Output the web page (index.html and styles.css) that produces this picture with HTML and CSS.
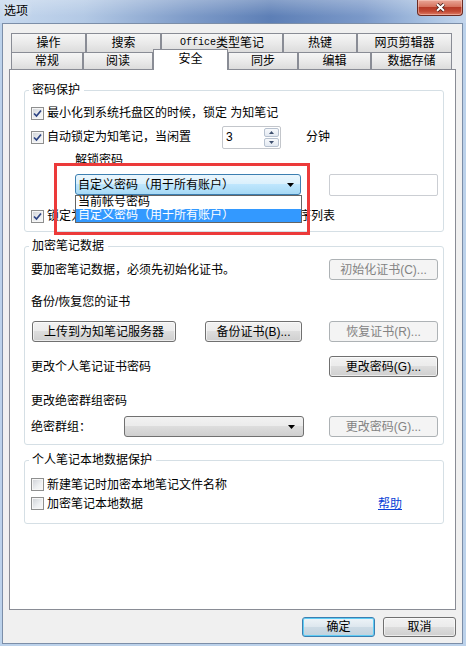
FILE: index.html
```html
<!DOCTYPE html>
<html lang="zh-CN">
<head>
  <meta charset="UTF-8">
  <title>选项</title>
  <link rel="stylesheet" href="styles.css">
</head>
<body>
  <div class="window">
    <div class="titlebar">
      <span class="title">选项</span>
      <div class="close-btn">
        <svg width="11" height="9" viewBox="0 0 11 9">
          <path d="M2 1.2 L9 7.8 M9 1.2 L2 7.8" stroke="#4a1e18" stroke-width="3.6" fill="none"/>
          <path d="M2 1.2 L9 7.8 M9 1.2 L2 7.8" stroke="#fff" stroke-width="2" fill="none"/>
        </svg>
      </div>
    </div>

    <div class="client">
      <div class="tabs">
        <div class="tab-row row-back">
          <div class="tab">操作</div>
          <div class="tab">搜索</div>
          <div class="tab"><span class="mono">Office</span>类型笔记</div>
          <div class="tab">热键</div>
          <div class="tab">网页剪辑器</div>
        </div>
        <div class="tab-row row-front">
          <div class="tab">常规</div>
          <div class="tab">阅读</div>
          <div class="tab selected">安全</div>
          <div class="tab">同步</div>
          <div class="tab">编辑</div>
          <div class="tab">数据存储</div>
        </div>
      </div>

      <div class="panel">
        <fieldset class="group group-lock">
          <legend>密码保护</legend>
          <label class="check-line tall">
            <span class="cb"><svg width="9" height="9" viewBox="0 0 9 9"><path d="M1 4.5 L3.5 7 L8 1.5" stroke="#2c4383" stroke-width="1.7" fill="none"/></svg></span>
            最小化到系统托盘区的时候，锁定 为知笔记
          </label>
          <div class="check-line tall">
            <label class="check-line">
              <span class="cb"><svg width="9" height="9" viewBox="0 0 9 9"><path d="M1 4.5 L3.5 7 L8 1.5" stroke="#2c4383" stroke-width="1.7" fill="none"/></svg></span>
              自动锁定为知笔记，当闲置
            </label>
            <div class="spin">
              <span class="spin-value">3</span>
              <span class="spin-btns">
                <span class="spin-btn"><svg width="5" height="3" viewBox="0 0 5 3"><polygon points="2.5,0 5,3 0,3" fill="#3d4f6e"/></svg></span>
                <span class="spin-btn"><svg width="5" height="3" viewBox="0 0 5 3"><polygon points="0,0 5,0 2.5,3" fill="#3d4f6e"/></svg></span>
              </span>
            </div>
            <span class="unit">分钟</span>
          </div>
          <div class="unlock-label">解锁密码</div>
          <div class="unlock-row">
            <div class="combo-wrap">
              <div class="combo combo-active">
                <span>自定义密码（用于所有账户）</span>
                <svg width="7" height="4" viewBox="0 0 7 4"><polygon points="0,0 7,0 3.5,4" fill="#000"/></svg>
              </div>
              <ul class="dropdown">
                <li>当前帐号密码</li>
                <li class="highlight">自定义密码（用于所有账户）</li>
              </ul>
            </div>
            <div class="textbox"></div>
          </div>
          <label class="check-line lock-line">
            <span class="cb"><svg width="9" height="9" viewBox="0 0 9 9"><path d="M1 4.5 L3.5 7 L8 1.5" stroke="#2c4383" stroke-width="1.7" fill="none"/></svg></span>
            锁定为知笔记时，隐藏笔记本树和标签目录的排序列表
          </label>
        </fieldset>

        <fieldset class="group group-cert">
          <legend>加密笔记数据</legend>
          <div class="btn-row first">
            <span>要加密笔记数据，必须先初始化证书。</span>
            <button class="btn btn-side" disabled>初始化证书(C)...</button>
          </div>
          <div class="text-line backup-title">备份/恢复您的证书</div>
          <div class="btn-row upload-row">
            <button class="btn btn-upload">上传到为知笔记服务器</button>
            <button class="btn btn-backup">备份证书(B)...</button>
            <button class="btn btn-side" disabled>恢复证书(R)...</button>
          </div>
          <div class="btn-row change-row">
            <span>更改个人笔记证书密码</span>
            <button class="btn btn-side">更改密码(G)...</button>
          </div>
          <div class="text-line secret-title">更改绝密群组密码</div>
          <div class="btn-row secret-row">
            <span>绝密群组：</span>
            <div class="combo combo-group">
              <span></span>
              <svg width="7" height="4" viewBox="0 0 7 4"><polygon points="0,0 7,0 3.5,4" fill="#000"/></svg>
            </div>
            <button class="btn btn-side" disabled>更改密码(G)...</button>
          </div>
        </fieldset>

        <fieldset class="group group-local">
          <legend>个人笔记本地数据保护</legend>
          <label class="check-line short">
            <span class="cb"></span>
            新建笔记时加密本地笔记文件名称
          </label>
          <div class="check-line short">
            <label class="check-line">
              <span class="cb"></span>
              加密笔记本地数据
            </label>
            <a class="help-link" href="#">帮助</a>
          </div>
        </fieldset>

        <div class="annotation"></div>
      </div>

      <div class="footer">
        <button class="btn btn-default">确定</button>
        <button class="btn">取消</button>
      </div>
    </div>
  </div>
</body>
</html>
```

FILE: styles.css
```css
* {
  box-sizing: border-box;
}

body {
  margin: 0;
  width: 466px;
  height: 646px;
  overflow: hidden;
  font-family: "Liberation Sans", "Noto Sans CJK SC", sans-serif;
  font-size: 12px;
  line-height: 14px;
  color: #000;
  background: #bcd2eb;
}

.window {
  height: 646px;
  display: flex;
  flex-direction: column;
}

/* title bar */
.titlebar {
  height: 23px;
  display: flex;
  justify-content: space-between;
  align-items: flex-start;
  padding-left: 4px;
  background:
    linear-gradient(rgba(255, 255, 255, 0.25), rgba(255, 255, 255, 0) 70%),
    linear-gradient(90deg, #c6d8ee 0%, #b3c9e5 18%, #7f9cc9 40%, #5d7fb6 58%, #7b99c9 78%, #a9c2e2 92%, #c4d6ec 100%);
}

.title {
  margin-top: 4px;
  line-height: 14px;
  text-shadow: 0 0 6px rgba(255, 255, 255, 0.9);
}

.close-btn {
  width: 46px;
  height: 16px;
  margin-right: 3px;
  display: flex;
  align-items: center;
  justify-content: center;
  border: 1px solid #6b2b22;
  border-top: none;
  border-radius: 0 0 4px 4px;
  background: linear-gradient(#e9a697 0%, #d6735f 45%, #b63a27 50%, #c24833 75%, #de7d66 100%);
  box-shadow: inset 0 0 0 1px rgba(255, 220, 210, 0.45);
}

/* client area */
.client {
  height: 621px;
  margin: 0 3px 0 2px;
  padding: 9px 0 0 6px;
  background: #f0f0f0;
  border: 1px solid #7c8ea8;
}

/* tabs */
.tabs {
  margin-left: 2px;
  display: flex;
  flex-direction: column;
}

.tab-row {
  display: flex;
  align-items: flex-start;
}

.row-back {
  height: 19px;
}

.row-front {
  height: 17px;
}

.tab {
  height: 100%;
  display: flex;
  align-items: center;
  justify-content: center;
  border: 1px solid #898c95;
  border-bottom: none;
  background: linear-gradient(#f6f6f6, #e9e9e9 55%, #dcdcdc);
}

.row-back .tab:nth-child(1) { width: 75px; }
.row-back .tab:nth-child(2) { width: 75px; }
.row-back .tab:nth-child(3) { width: 122px; }
.row-back .tab:nth-child(4) { width: 74px; }
.row-back .tab:nth-child(5) { width: 95px; }

.row-front .tab:nth-child(1) { width: 72px; }
.row-front .tab:nth-child(2) { width: 70px; }
.row-front .tab:nth-child(3) { width: 75px; }
.row-front .tab:nth-child(4) { width: 70px; }
.row-front .tab:nth-child(5) { width: 73px; }
.row-front .tab:nth-child(6) { width: 81px; }

.tab.selected {
  height: 21px;
  margin-top: -3px;
  padding-bottom: 2px;
  background: #fff;
  position: relative;
  z-index: 1;
}

.mono {
  font-family: "Liberation Mono", monospace;
  font-size: 10px;
}

/* tab page */
.panel {
  position: relative;
  width: 447px;
  height: 541px;
  padding: 13px 11px 0 14px;
  background: #fff;
  border: 1px solid #898c95;
}

.group {
  width: 420px;
  min-width: 0;
  margin: 0;
  padding: 4px 5px 5px 6px;
  border: 1px solid #d5dfe5;
  border-radius: 3px;
}

.group legend {
  margin-left: -2px;
  padding: 0 4px 0 3px;
  line-height: 14px;
}

.group-cert {
  margin-top: 7px;
  padding-top: 6px;
  padding-bottom: 7px;
}

.group-local {
  margin-top: 8px;
  padding-top: 8px;
  padding-bottom: 10px;
}

.check-line {
  display: flex;
  align-items: center;
}

.check-line.tall {
  height: 24px;
}

.check-line.short {
  height: 19px;
}

.lock-line {
  height: 20px;
  margin-top: 10px;
}

.cb {
  width: 13px;
  height: 13px;
  flex: none;
  margin-right: 3px;
  display: flex;
  align-items: center;
  justify-content: center;
  border: 1px solid #8e8f8f;
  background: linear-gradient(135deg, #cdd0d5, #eef0f2 60%, #f8f8f8);
  box-shadow: inset 0 0 0 1px #f6f6f6;
}

/* spin box */
.spin {
  width: 59px;
  height: 23px;
  margin-left: 31px;
  display: flex;
  align-items: center;
  justify-content: space-between;
  padding: 1px 1px 1px 3px;
  background: #fff;
  border: 1px solid #c3c6cb;
  border-radius: 2px;
}

.spin-value {
  font-size: 12px;
}

.spin-btns {
  width: 15px;
  height: 19px;
  display: flex;
  flex-direction: column;
  gap: 1px;
}

.spin-btn {
  flex: 1;
  display: flex;
  align-items: center;
  justify-content: center;
  border: 1px solid #b7c1cf;
  border-radius: 2px;
  background: linear-gradient(#f7f9fc, #e3e9f1);
}

.unit {
  margin-left: 25px;
}

.unlock-label {
  margin: 4px 0 0 44px;
}

.unlock-row {
  display: flex;
  align-items: flex-start;
  margin-top: 7px;
  padding-left: 44px;
  height: 22px;
}

.combo-wrap {
  position: relative;
  width: 227px;
}

.combo {
  height: 21px;
  display: flex;
  align-items: center;
  justify-content: space-between;
  padding: 0 6px 0 2px;
  border: 1px solid #707070;
  border-radius: 3px;
  background: linear-gradient(#f2f2f2 0%, #ebebeb 50%, #dddddd 50%, #cfcfcf 100%);
}

.combo-active {
  border-color: #3c7fb1;
  background: linear-gradient(#eaf6fd 0%, #d9f0fc 50%, #bee6fd 50%, #a7d9f5 100%);
}

.combo-group {
  width: 180px;
  margin-left: 33px;
  padding-right: 8px;
}

.dropdown {
  position: absolute;
  top: 21px;
  left: 0;
  width: 227px;
  margin: 0;
  padding: 0;
  list-style: none;
  background: #fff;
  border: 1px solid #646464;
  z-index: 2;
}

.dropdown li {
  height: 13px;
  line-height: 13px;
  padding-left: 2px;
}

.dropdown li.highlight {
  background: #3399ff;
  color: #fff;
}

.textbox {
  width: 109px;
  height: 22px;
  margin-left: 28px;
  background: #fff;
  border: 1px solid #cbced3;
  border-radius: 2px;
}

/* buttons */
.btn {
  height: 21px;
  padding: 0;
  font-family: inherit;
  font-size: 12px;
  line-height: 14px;
  color: #000;
  text-align: center;
  border: 1px solid #707070;
  border-radius: 3px;
  background: linear-gradient(#f2f2f2 0%, #ebebeb 50%, #dddddd 50%, #cfcfcf 100%);
  box-shadow: inset 0 0 0 1px rgba(255, 255, 255, 0.6);
}

.btn:disabled {
  color: #838383;
  border-color: #adb2b5;
  background: #f4f4f4;
  box-shadow: none;
}

.btn-row {
  display: flex;
  align-items: center;
  height: 21px;
}

.btn-side {
  width: 109px;
  margin-left: auto;
}

.btn-upload {
  width: 144px;
  margin-left: 1px;
}

.btn-backup {
  width: 97px;
  margin-left: 29px;
}

.backup-title {
  margin-top: 15px;
}

.upload-row {
  margin-top: 12px;
}

.change-row {
  margin-top: 14px;
}

.secret-title {
  margin-top: 17px;
}

.secret-row {
  margin-top: 8px;
}

.help-link {
  margin-left: auto;
  margin-right: 36px;
  color: #0a3fd6;
  text-decoration: underline;
}

/* red highlight drawn over the dialog */
.annotation {
  position: absolute;
  left: 44px;
  top: 93px;
  width: 256px;
  height: 72px;
  border: 3px solid #ec3a3a;
  pointer-events: none;
  z-index: 3;
}

.footer {
  width: 447px;
  margin-top: 7px;
  display: flex;
  justify-content: flex-end;
  gap: 8px;
}

.footer .btn {
  width: 73px;
  height: 20px;
}

.btn-default {
  border-color: #3c7fb1;
  background: linear-gradient(#eef4f8 0%, #dde7ee 50%, #cddbe5 50%, #c1d2de 100%);
  box-shadow: inset 0 0 0 1px #5fcdf5;
}
```
